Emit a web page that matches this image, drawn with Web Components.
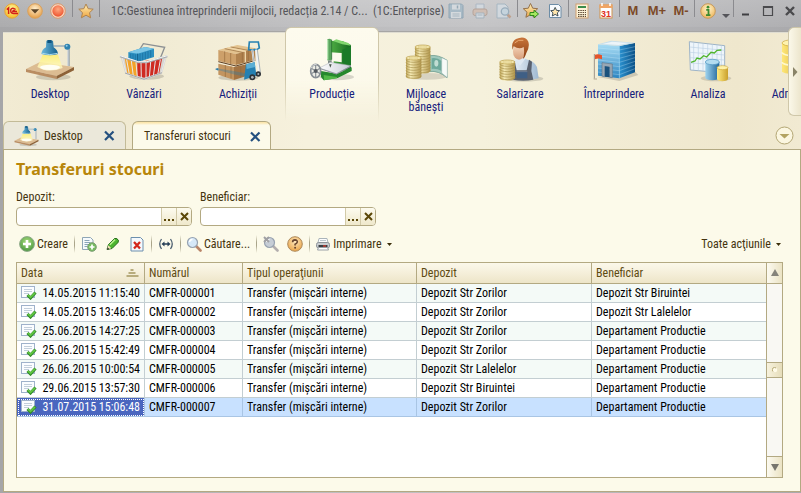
<!DOCTYPE html>
<html lang="ro">
<head>
<meta charset="utf-8">
<title>Transferuri stocuri</title>
<style>
html,body{margin:0;height:100%}
body{font:12px/16px "Roboto Condensed","Liberation Sans",sans-serif;--line:#b3a982;--ink:#44340f;--nav:#15207c;background:#a8a8ab;overflow:hidden}
</style>
</head>
<body>
<erp-window></erp-window>

<template id="t-window">
<style>
:host{display:flex;flex-direction:column;min-height:100vh;background:linear-gradient(90deg,#a6a6a8,#bcbcbe 40%,#c0c0c2 60%,#a9a9ac)}
.shell{flex:1;display:flex;flex-direction:column;margin:0 0 1px 3px}
</style>
<erp-titlebar></erp-titlebar>
<div class="shell">
<erp-head></erp-head>
<erp-page></erp-page>
</div>
</template>

<template id="t-titlebar">
<style>
:host{display:flex;align-items:center;height:27px;color:#555559;background:linear-gradient(#fff3,#fff1);box-sizing:border-box;padding-bottom:6px}
button{all:unset;width:24px;height:20px;display:flex;align-items:center;justify-content:center;flex:none}
.s button{width:23px}
.w button{width:22px}
.c{width:12px}
div{display:flex}
i{width:1px;height:17px;margin:0 1px;background:#8b8b8f;flex:none;align-self:flex-start}
h1{flex:1;min-width:0;margin:0;font-size:12px;font-weight:normal;line-height:20px;padding-left:10px;white-space:nowrap;overflow:hidden}
b{font:bold 13px/20px "Liberation Sans",sans-serif;color:#7c4a28}
.s{padding-right:2px}
</style>
<div class="s"><button aria-label="Meniu"><erp-icon name="logo"></erp-icon></button><button aria-label="Opțiuni"><erp-icon name="round-down"></erp-icon></button><button aria-label="Oprire"><erp-icon name="round-red"></erp-icon></button></div>
<i></i><button aria-label="Favorite"><erp-icon name="star"></erp-icon></button><i></i>
<h1>1C:Gestiunea întreprinderii mijlocii, redacția 2.14 / C...&nbsp; (1C:Enterprise)</h1>
<button aria-label="Salvare" disabled><erp-icon name="save"></erp-icon></button><button aria-label="Imprimare" disabled><erp-icon name="print-off"></erp-icon></button><button aria-label="Previzualizare" disabled><erp-icon name="preview"></erp-icon></button>
<i></i><button aria-label="Adaugă la favorite"><erp-icon name="star-go"></erp-icon></button><button aria-label="Link"><erp-icon name="star-doc"></erp-icon></button>
<i></i><button aria-label="Calculator"><erp-icon name="calc"></erp-icon></button><button aria-label="Calendar"><erp-icon name="calendar"></erp-icon></button>
<i></i><button><b>M</b></button><button><b>M+</b></button><button><b>M-</b></button>
<i></i><button aria-label="Informații"><erp-icon name="info"></erp-icon></button><button class="c" aria-label="Mai mult"><erp-icon name="caret-grey"></erp-icon></button>
<i></i><div class="w"><button aria-label="Minimizare"><erp-icon name="min"></erp-icon></button><button aria-label="Maximizare"><erp-icon name="max"></erp-icon></button><button aria-label="Închidere"><erp-icon name="close-win"></erp-icon></button></div>
</template>

<template id="t-head">
<style>
:host{display:block;position:relative;overflow:hidden;background:linear-gradient(#8b8b8e,#fbf8e8) 0 4px/100% 2px no-repeat,linear-gradient(90deg,#f2ebd3,#efe8cf 10%,#f6f1dd 38%,#f5f1dc 60%,#efe7cd 92%,#f1ead2) 0 5px no-repeat}
nav{display:flex;height:94px}
.more{all:unset;position:absolute;right:0;top:0;width:12px;height:87px;border:1px solid #cfc7a9;border-right:0;border-radius:6px 0 0 6px;background:linear-gradient(90deg,#fbf8e9,#ece5cc);display:flex;align-items:center;justify-content:center}
.bar{display:flex;align-items:flex-end;height:28px;gap:6px}
.list{all:unset;margin-left:auto;padding:0 7px 4px 0;line-height:0}
</style>
<nav>
<erp-section icon="desktop">Desktop</erp-section>
<erp-section icon="sales">Vânzări</erp-section>
<erp-section icon="purchase">Achiziții</erp-section>
<erp-section icon="production" active>Producție</erp-section>
<erp-section icon="money">Mijloace bănești</erp-section>
<erp-section icon="salary">Salarizare</erp-section>
<erp-section icon="company">Întreprindere</erp-section>
<erp-section icon="analysis">Analiza</erp-section>
<erp-section icon="admin">Administrare</erp-section>
</nav>
<button class="more" aria-label="Secțiunile următoare"><erp-icon name="right"></erp-icon></button>
<div class="bar">
<erp-tab icon="desktop-small">Desktop</erp-tab>
<erp-tab active>Transferuri stocuri</erp-tab>
<button class="list" aria-label="Lista ferestrelor"><erp-icon name="circle-down"></erp-icon></button>
</div>
</template>

<template id="t-section">
<style>
:host{display:block;flex:none;width:94px}
button{all:unset;box-sizing:border-box;position:relative;width:100%;height:100%;display:flex;flex-direction:column;align-items:center;padding:10px 8px 0;color:var(--nav);text-align:center;line-height:13px}
:host([active]) button::before{content:"";position:absolute;inset:0;border-radius:6px 6px 0 0;border:1px solid #cfc7a9;border-bottom:0;background:linear-gradient(#fdfbee,#fbf8e8);mask-image:linear-gradient(#000 55%,transparent)}
erp-icon,span{position:relative}
span{margin-top:6px;font-size:12px;max-width:66px}
</style>
<button><erp-icon></erp-icon><span><slot></slot></span></button>
</template>

<template id="t-tab">
<style>
:host{display:flex;align-items:center;box-sizing:border-box;height:28px;width:123px;padding:0 10px;border:1px solid #c3bb98;border-bottom:0;border-radius:6px 6px 0 0;background:#ebe8da;color:var(--ink)}
:host([active]){width:139px;height:29px;margin-bottom:-1px;padding:0 9px 0 11px;background:linear-gradient(#fbe3a4,#fcf0cb 2px,#fcfaea 3px);border-color:var(--line);position:relative;z-index:1}
button{all:unset;line-height:0}
.t{flex:1;line-height:26px}
erp-icon:not([name]){display:none}
erp-icon[name=desktop-small]{margin-right:5px}
</style>
<erp-icon></erp-icon><button class="t"><slot></slot></button><button aria-label="Închide fila"><erp-icon name="x-blue"></erp-icon></button>
</template>

<template id="t-page">
<style>
:host{flex:1;display:flex;flex-direction:column;border:1px solid var(--line);background:#fcfaea;padding:7px 17px 13px 12px;color:var(--ink)}
h2{margin:0 0 8px;font:bold 16px/24px "Noto Sans","DejaVu Sans",sans-serif;color:#b8860b}
.f{display:flex;gap:8px;margin-bottom:6px}
</style>
<h2>Transferuri stocuri</h2>
<div class="f"><erp-field label="Depozit:"></erp-field><erp-field label="Beneficiar:"></erp-field></div>
<erp-toolbar></erp-toolbar>
<erp-list></erp-list>
</template>

<template id="t-field">
<style>
:host{display:block;width:176px}
label{display:block;line-height:16px;margin-bottom:2px}
.b{display:flex;height:17px;border:1px solid var(--line);border-radius:4px;background:#fff;overflow:hidden}
input{all:unset;flex:1;min-width:0;padding:0 4px;color:#000}
button{all:unset;width:14px;border-left:1px solid #d2caa8;background:linear-gradient(#fdfbef,#efe8cb);display:flex;align-items:center;justify-content:center}
</style>
<label for="v"></label>
<div class="b"><input id="v"><button aria-label="Alege"><erp-icon name="dots"></erp-icon></button><button aria-label="Golește"><erp-icon name="x-brown"></erp-icon></button></div>
</template>

<template id="t-toolbar">
<style>
:host{display:flex;align-items:center;height:24px;margin-bottom:6px;white-space:nowrap}
button{all:unset;width:24px;height:24px;display:flex;align-items:center;justify-content:center;flex:none}
.t{width:auto;padding:0 4px 0 3px;gap:2px}
.t erp-icon+span+erp-icon,.r erp-icon{margin-left:3px}
i{width:1px;height:18px;margin:0 2px;background:linear-gradient(#fcfaea,#aaa58a 40%,#aaa58a 60%,#fcfaea);flex:none}
.r{margin-left:auto;padding-right:2px}
</style>
<button class="t"><erp-icon name="add"></erp-icon><span>Creare</span></button><i></i>
<button aria-label="Copiere"><erp-icon name="doc-add"></erp-icon></button><button aria-label="Modificare"><erp-icon name="pencil"></erp-icon></button><button aria-label="Ștergere"><erp-icon name="doc-del"></erp-icon></button><i></i>
<button aria-label="Interval"><erp-icon name="range"></erp-icon></button><i></i>
<button class="t"><erp-icon name="search"></erp-icon><span>Căutare...</span></button><i></i>
<button aria-label="Anulare căutare" disabled><erp-icon name="search-off"></erp-icon></button><button aria-label="Ajutor"><erp-icon name="help"></erp-icon></button><i></i>
<button class="t"><erp-icon name="print"></erp-icon><span>Imprimare</span><erp-icon name="caret"></erp-icon></button>
<button class="t r"><span>Toate acţiunile</span><erp-icon name="caret"></erp-icon></button>
</template>

<template id="t-list">
<style>
:host{flex:1;display:flex;border:1px solid var(--line);background:#fff;color:#000}
.g{flex:1;min-width:0}
table{width:100%;table-layout:fixed;border-collapse:separate;border-spacing:0}
th,td{box-sizing:border-box;height:19px;padding:0 4px;border:0 solid #c3ced2;border-width:0 1px 1px 0;text-align:left;font-weight:normal;white-space:nowrap;overflow:hidden;line-height:18px}
th{height:21px;color:#5e4b12;border-color:var(--line);background:linear-gradient(#fbf8ea,#f5efda 50%,#ede5c8);line-height:20px}
th:last-child,td:last-child{border-right:0}
tr:nth-child(odd) td{background:#f4faf7}
tr.on td{background:#c8e1ff;border-color:#a9c5e4}
tr.on td:first-child{background:#4a66bf;color:#fff;outline:1px dotted #fff;outline-offset:-2px}
div.d,th div{display:flex;align-items:center;justify-content:space-between}
th erp-icon{margin-right:1px}
.bar{width:15px;border-left:1px solid var(--line);background:#f9f8f3;display:flex;flex-direction:column}
.bar button{all:unset;height:20px;display:flex;align-items:center;justify-content:center;background:linear-gradient(90deg,#fcfaf0,#ebe3c4)}
.bar button:first-child{border-bottom:1px solid var(--line)}
.bar button:last-child{border-top:1px solid var(--line)}
.track{flex:1;display:flex;flex-direction:column}
.track::before{content:"";flex:1}
.track::after{content:"";flex:1}
.thumb{height:14px;border:solid var(--line);border-width:1px 0;background:linear-gradient(90deg,#f7f2dd,#e6ddba);display:flex;align-items:center;justify-content:center}
</style>
<div class="g"><table><colgroup><col style="width:128px"><col style="width:98px"><col style="width:174px"><col style="width:175px"><col></colgroup>
<thead><tr><th><div>Data<erp-icon name="sort"></erp-icon></div></th><th>Numărul</th><th>Tipul operaţiunii</th><th>Depozit</th><th>Beneficiar</th></tr></thead><tbody></tbody></table></div>
<div class="bar"><button aria-label="Sus"><erp-icon name="up"></erp-icon></button><div class="track"><div class="thumb"><erp-icon name="grip"></erp-icon></div></div><button aria-label="Jos"><erp-icon name="down"></erp-icon></button></div>
</template>

<script>
const svg=(w,h,vb,body)=>`<svg width="${w}" height="${h}" viewBox="${vb}" aria-hidden="true">${body}</svg>`;
const lg=(id,a,b,dir='v')=>`<linearGradient id="${id}" x1="0" y1="0" x2="${dir=='v'?0:1}" y2="${dir=='v'?1:0}"><stop offset="0" stop-color="${a}"/><stop offset="1" stop-color="${b}"/></linearGradient>`;
const rg=(id,a,b)=>`<radialGradient id="${id}" cx=".5" cy=".35" r=".6"><stop offset="0" stop-color="${a}"/><stop offset="1" stop-color="${b}"/></radialGradient>`;
/* stack of n coins: centre x, top y, half width */
const coins=(cx,y,r,n,step,c1='#f3e7ae',c2='#b79a45')=>{
 const h=n*step;let s=`<path d="M${cx-r} ${y}v${h}a${r} 8 0 0 0 ${2*r} 0v${-h}z" fill="url(#coin)"/>`;
 for(let i=1;i<=n;i++)s+=`<path d="M${cx-r} ${y+i*step-3}a${r} 8 0 0 0 ${2*r} 0" fill="none" stroke="#a8914c" stroke-width="2"/>`;
 return s+`<ellipse cx="${cx}" cy="${y}" rx="${r}" ry="6" fill="${c1}" stroke="${c2}" stroke-width="2"/><ellipse cx="${cx}" cy="${y}" rx="${r-9}" ry="3" fill="none" stroke="#d6c27c" stroke-width="1.5"/>`};
const coinDef=`<defs><linearGradient id="coin"><stop offset="0" stop-color="#bda356"/><stop offset=".3" stop-color="#f6ebb5"/><stop offset="1" stop-color="#b0944a"/></linearGradient></defs>`;
const cyl=(x,y,w,h,id)=>`<path d="M${x} ${y}v${h}a${w/2} 8 0 0 0 ${w} 0v${-h}z" fill="url(#${id})"/>`;
const desk=`<defs>${lg('db','#6db9dd','#145f8c','h')}${lg('dy','#fff06a','#fffbd8')}</defs>
<ellipse cx="160" cy="232" rx="52" ry="10" fill="#000" opacity=".14"/>
<path d="M206 147V200" stroke="#8b99a4" stroke-width="6"/><path d="M204 147V200" stroke="#dfe6ea" stroke-width="3"/>
<path d="M160 139H200" stroke="#9fb2bd" stroke-width="5"/>
<path d="M78 208L120 187L222 202L170 229Z" fill="#dcbc92"/><path d="M78 208L170 229V238L78 217Z" fill="#b98d62"/><path d="M170 229L222 202V212L170 238Z" fill="#8d6238"/>
<path d="M128 165L112 202Q145 222 188 205L174 165Z" fill="url(#dy)" opacity=".82"/><ellipse cx="150" cy="203" rx="30" ry="8" fill="#fffef2"/>
<path d="M139 123h20l2 20q12 8 13 20q-25 8-50 0q1-13 14-20z" fill="url(#db)"/><rect x="142" y="121" width="13" height="9" fill="#0f557f"/><path d="M127 161q22 8 46 0" stroke="#a8d9ee" stroke-width="3" fill="none"/>
<circle cx="202" cy="141" r="9" fill="#2d82b0"/><circle cx="200" cy="138" r="3" fill="#9ad0e8"/>`;
const mag=(g,h,d='')=>svg(16,16,'0 0 16 16',`<path d="M10 10L14.500 14.500" stroke="${h}" stroke-width="2.600" stroke-linecap="round"/><circle cx="6.500" cy="6.500" r="5" fill="${g}" stroke="#97a2b0" stroke-width="1.200"/><path d="M3.500 6a3 3 0 0 1 3-2.600" stroke="#fff" fill="none" stroke-width="1.500"/>${d}`);
const printer=svg(16,16,'0 0 16 16',`<path d="M4 2.500h8l1 4H3z" fill="#fdfdfd" stroke="#aab4ba"/><path d="M5 4.500h6" stroke="#bcc6cc"/><rect x="1.500" y="6.500" width="13" height="5.500" rx="2" fill="#c9cdd0" stroke="#8f959a"/><path d="M3.500 9h9v2h-9z" fill="#3a3e42"/><path d="M3.500 11.500h9l1 2.500h-11z" fill="#fff" stroke="#9aa0a5"/><path d="M8 10h3" stroke="#e5402f" stroke-width="1.200"/>`);
const starP='M8 1L10.2 5.7L15.2 6.2L11.5 9.7L12.6 14.8L8 12.2L3.4 14.8L4.5 9.7L.8 6.2L5.8 5.7Z';
const ICONS={
logo:svg(16,16,'0 0 16 16',`<defs>${rg('a','#fff9a0','#f5bf2c')}</defs><circle cx="8" cy="8" r="7.200" fill="url(#a)" stroke="#e7a43a"/><path d="M2.800 6.600L4.600 5V11M11.600 6.500Q8.400 3.900 6.900 6.400Q6 10.300 9.400 10.400H14M11 8.200Q9.200 6.700 8.800 8.600H13" fill="none" stroke="#d3201a" stroke-width="1.500"/>`),
'round-down':svg(16,16,'0 0 16 16',`<defs>${rg('a','#fff0d0','#e6a24e')}</defs><circle cx="8" cy="8" r="7.300" fill="url(#a)" stroke="#d9a05c"/><path d="M3.800 6.300h8.400L8 10.600z" fill="#5d4527"/>`),
'round-red':svg(16,16,'0 0 16 16',`<defs>${rg('a','#ffa880','#ee5a35')}</defs><circle cx="8" cy="8" r="7.300" fill="#f8d9c2" stroke="#d9986c"/><circle cx="8" cy="8" r="5.700" fill="url(#a)"/>`),
star:svg(16,16,'0 0 16 16',`<defs>${lg('a','#fff0b8','#efa53e')}</defs><path d="${starP}" fill="url(#a)" stroke="#b08450"/>`),
save:svg(16,16,'0 0 16 16',`<g opacity=".55"><path d="M1 1h12.500L15 2.500V15H1z" fill="#8fb0c4" stroke="#648aa3"/><rect x="4" y="1.500" width="8" height="5" fill="#dde6ec"/><path d="M9.500 2.500v3" stroke="#6c8ea4" stroke-width="1.500"/><rect x="3" y="9" width="10" height="6" fill="#dfe8ee"/><path d="M4.500 11h7M4.500 13h7" stroke="#8fa9b9"/></g>`),
'print-off':svg(16,16,'0 0 16 16',`<g opacity=".6"><path d="M4 1h8v6H4z" fill="#d7e2ea" stroke="#9ab"/><rect x="1" y="6" width="14" height="6.500" rx="2" fill="#d4b7a5" stroke="#a78a78"/><path d="M4 10h8v5H4z" fill="#dbe6ee" stroke="#8fa5b5"/><path d="M5.500 12h5" stroke="#8fa5b5"/></g>`),
preview:svg(16,16,'0 0 16 16',`<g opacity=".6"><path d="M1 1h8l3 3v11H1z" fill="#d9e4ec" stroke="#8fa9bb"/><path d="M11.500 11.500L14.500 14.500" stroke="#b98866" stroke-width="2.500"/><circle cx="9" cy="8.500" r="3.700" fill="#c4dceb" stroke="#7c9cb2" stroke-width="1.300"/></g>`),
'star-go':svg(16,16,'0 0 16 16',`<defs>${lg('a','#fff0b8','#e9a54c')}</defs><path d="${starP}" transform="translate(-.5 -.5)" fill="url(#a)" stroke="#94714b"/><path d="M7 9.500h4V7.200L15.500 11L11 14.800V12.500H7z" fill="#a4e860" stroke="#2e8b1c"/>`),
'star-doc':svg(16,16,'0 0 16 16',`<path d="M2.500 1.500h9l2.500 2.500v10.500h-11.500z" fill="#f7fafc" stroke="#6c8ca6"/><path d="${starP}" transform="translate(3.200 3.800) scale(.62)" fill="#ffe6ad" stroke="#33444f" stroke-width="1.500"/>`),
calc:svg(16,16,'0 0 16 16',`<rect x="2" y="1" width="12" height="14" fill="#fdf3d8" stroke="#d0a070"/><rect x="4" y="3" width="8" height="2" fill="#3c8c4c"/><path d="M4 7.500h8M4 9.500h8M4 11.500h8M4 13.300h8" stroke="#5f4a35" stroke-width="1.200" stroke-dasharray="1.500 .8"/>`),
calendar:svg(16,16,'0 0 16 16',`<rect x="2" y="2" width="12" height="13" fill="#fff" stroke="#d1934e"/><rect x="1.500" y="1.500" width="13" height="3.500" fill="#f0a565"/><path d="M4 0v3M12 0v3" stroke="#fff" stroke-width="1.500"/><text x="8" y="13.500" text-anchor="middle" font-family="Liberation Sans,sans-serif" font-size="9" font-weight="bold" fill="#e0301c">31</text>`),
info:svg(16,16,'0 0 16 16',`<defs>${rg('a','#fff3c8','#efbb66')}</defs><circle cx="8" cy="8" r="7.300" fill="url(#a)" stroke="#c69a5c"/><circle cx="8" cy="4.200" r="1.400" fill="#3c8b30"/><path d="M6.200 6.800h2.300v5.200M6 12.200h4.400" stroke="#3c8b30" stroke-width="1.800" fill="none"/>`),
'caret-grey':svg(8,16,'0 0 8 16','<path d="M0 11h8L4 15z" fill="#55555a"/>'),
min:svg(10,12,'0 0 10 12','<path d="M1 9.500h7" stroke="#3f3f42" stroke-width="2"/>'),
max:svg(12,12,'0 0 12 12','<path d="M1 1.500h10M1 10.500h10M1.500 1v10M10.500 1v10" stroke="#4a4a4d" stroke-width="1.200"/><path d="M1 2h10" stroke="#4a4a4d" stroke-width="2"/>'),
'close-win':svg(12,12,'0 0 12 12','<path d="M2 2L10 10M10 2L2 10" stroke="#4a4a4d" stroke-width="2.400"/>'),
right:svg(6,10,'0 0 6 10','<path d="M1 0v10L5.500 5z" fill="#8a8468"/>'),
'circle-down':svg(19,19,'0 0 19 19','<circle cx="9.500" cy="9.500" r="8.500" fill="#fbf6e0" stroke="#b3a674"/><path d="M4.500 8h10L9.500 12.500z" fill="#b3a361"/>'),
'x-blue':svg(11,11,'0 0 11 11','<path d="M1 1.500L9.500 10M9.500 1.500L1 10" stroke="#24507f" stroke-width="2.200"/>'),
'x-brown':svg(9,9,'0 0 9 9','<path d="M1 1L8 8M8 1L1 8" stroke="#5b4708" stroke-width="2"/>'),
dots:svg(11,9,'0 0 11 9','<path d="M0 7h2v2H0zM4 7h2v2H4zM8 7h2v2H8z" fill="#5b4708"/>'),
caret:svg(5,3,'0 0 5 3','<path d="M0 0h5L2.500 3z" fill="#3b2d08"/>'),
sort:svg(13,8,'0 0 13 8','<path d="M4.500 0h3v2h-3zM2.500 3h7v2h-7zM.5 6h12v2H.5z" fill="#b8ac7d"/>'),
up:svg(8,8,'0 0 8 8','<path d="M4 0L8 7H0z" fill="#85837a"/>'),
down:svg(8,8,'0 0 8 8','<path d="M0 1h8L4 8z" fill="#77756d"/>'),
grip:svg(6,6,'0 0 6 6','<circle cx="3" cy="3" r="2.200" fill="#fffbe8"/><path d="M1 4.500A2.200 2.200 0 0 1 4 1" stroke="#b5a876" fill="none"/>'),
add:svg(16,16,'0 0 16 16',`<defs>${rg('a','#a9dd7d','#529d45')}</defs><circle cx="8" cy="8" r="7.400" fill="url(#a)" stroke="#8fa98a"/><path d="M8 4v8M4 8h8" stroke="#fff" stroke-width="2.600"/>`),
'doc-add':svg(16,16,'0 0 16 16',`<path d="M1.500 1.500h8l2.500 2.500v9.500H1.500z" fill="#f6fafc" stroke="#8fa6b6"/><path d="M3.500 4.500h5M3.500 6.500h6M3.500 8.500h5M3.500 10.500h3" stroke="#8aa5b8"/><circle cx="11" cy="11" r="4.300" fill="#74bb5e" stroke="#7c9c75"/><path d="M11 8.500v5M8.500 11h5" stroke="#fff" stroke-width="1.700"/>`),
pencil:svg(16,16,'0 0 16 16',`<path d="M2 13.500L3.500 8.500L9.500 2.500Q12 1.500 13.500 4.500L13 6.500L7 12.500z" fill="#4cb52e" stroke="#256b1b"/><path d="M4.800 8.700L10 3.600" stroke="#b8f08e" stroke-width="1.600"/><path d="M2 13.500L3.300 9.200L6.300 12.300z" fill="#f3e0b8"/><path d="M2 13.800L2.600 11.500L4.300 13z" fill="#222"/>`),
'doc-del':svg(16,16,'0 0 16 16',`<path d="M2 1.500h9.500l2.500 2.500v11H2z" fill="#f5f9fc" stroke="#6c8fae"/><path d="M5 6L11 12.500M11 6L5 12.500" stroke="#d3271c" stroke-width="2.300"/>`),
range:svg(16,16,'0 0 16 16','<path d="M3.500 3Q0 8 3.500 13M12.500 3Q16 8 12.500 13" fill="none" stroke="#4c5f70" stroke-width="1.300"/><path d="M5 8h6" stroke="#263e56" stroke-width="1.500"/><path d="M3.500 8L6.500 5.500v5zM12.500 8L9.500 5.500v5z" fill="#263e56"/>'),
search:mag('#d6e8f8','#b98468'),
'search-off':mag('#c6cdd6','#b3aeae','<path d="M1 1L6 6M6 1L1 6" stroke="#a0a0a4" stroke-width="2"/>'),
help:svg(16,16,'0 0 16 16',`<defs>${rg('a','#ffe9bd','#eba850')}</defs><circle cx="8" cy="8" r="7.300" fill="url(#a)" stroke="#ad8a5c"/><path d="M5.600 6.300Q5.600 3.900 8 3.900Q10.400 4 10.300 6Q10.200 7.200 8.100 8.200V9.600" stroke="#6a4630" stroke-width="1.600" fill="none"/><circle cx="8.100" cy="11.700" r="1" fill="#6a4630"/>`),
print:printer,
row:svg(16,14,'0 0 16 14',`<rect x=".5" y=".5" width="13" height="11" fill="#fbfdff" stroke="#9fb2cb"/><path d="M3 3.500h8M3 5.500h8M3 7.500h5" stroke="#c3cfdb"/><path d="M6.500 9L9.500 12L14.500 6.500" stroke="#2f8a26" stroke-width="3" fill="none"/><path d="M7 9L9.500 11.400L14 6.800" stroke="#62c843" stroke-width="1.700" fill="none"/>`),
'desktop-small':svg(25,22,'75 115 150 130',desk),
desktop:svg(50,45,'75 112 150 135',desk),
sales:svg(50,45,'357 112 150 135',`<ellipse cx="440" cy="230" rx="52" ry="10" fill="#000" opacity=".15"/>
<path d="M420 148L430 132L494 143L480 178" fill="none" stroke="#8c9093" stroke-width="4"/>
<path d="M362 172L438 193L500 172L486 222L432 240L376 222Z" fill="#d8d4cf"/>
<path d="M374 176L412 186V230L382 220Z" fill="#f3a227"/><path d="M412 186L486 178L478 220L432 234L412 228Z" fill="#cf2a21"/>
<path d="M385 158L435 142L462 147V172L413 187L385 180Z" fill="#2d8fc0"/><path d="M385 158L435 142L462 147L413 162Z" fill="#7cc6e6"/><path d="M413 162V187" stroke="#125d89" stroke-width="3"/><path d="M420 162v22M428 160v22M436 157v22M444 154v22M452 152v21M392 162v18M399 163v19M406 164v20" stroke="#17699a" stroke-width="2"/>
<path d="M360 170L415 188H440L502 170" fill="none" stroke="#a9adb0" stroke-width="6"/><path d="M360 168L415 186H440L502 168" fill="none" stroke="#f6f7f7" stroke-width="3"/>
<path d="M367 176L379 222L432 240L484 220L496 176M380 180L388 224M394 184L400 229M408 188L412 233M423 190L424 237M438 190V238M452 187L448 234M466 184L460 230M481 180L473 226" fill="none" stroke="#e6e8e9" stroke-width="3"/><path d="M375 220L432 239L486 219" fill="none" stroke="#a5a7a9" stroke-width="3"/>`),
purchase:svg(50,45,'639 112 150 135',`<ellipse cx="715" cy="234" rx="60" ry="9" fill="#000" opacity=".15"/>
<path d="M655 192L702 202V241L655 225Z" fill="#c39560"/><path d="M702 202L756 190V224L702 241Z" fill="#a27343"/>
<path d="M655 151L712 136L766 146L708 163Z" fill="#e3c28e"/><path d="M655 151L708 163V196L655 184Z" fill="#cda06a"/><path d="M708 163L766 146V180L708 196Z" fill="#b0824e"/>
<path d="M674 147L727 158V190M692 142L745 152V184M674 155V188M692 160V193M676 196V232M693 200V236M722 198V233M738 194V228" stroke="#966b3d" stroke-width="2" fill="none"/><path d="M682 144L736 155V187" stroke="#f0d7aa" stroke-width="4" fill="none"/><path d="M655 186L708 199L766 182" stroke="#5d3c1d" stroke-width="3" fill="none"/>
<path d="M646 209L700 224L742 232L744 222L700 214L650 206Z" fill="#2c7ca8" opacity=".35"/><path d="M645 208l10-3v8z" fill="#2c7ca8"/>
<path d="M748 127H775L778 145Q770 153 746 150Z" fill="none" stroke="#2681b2" stroke-width="5"/><path d="M757 150L766 222M768 150L778 217" stroke="#f0f3f5" stroke-width="6"/><path d="M757 150L766 222M772 150L781 217" stroke="#8997a2" stroke-width="2"/>
<path d="M738 194L764 188L769 228L732 240Z" fill="#2580b2"/><path d="M738 194L764 188L766 202L740 208Z" fill="#5baed5"/>
<circle cx="757" cy="233" r="9" fill="#2e3338"/><circle cx="757" cy="233" r="4" fill="#aeb6bc"/><circle cx="775" cy="223" r="8" fill="#2e3338"/><circle cx="775" cy="223" r="3" fill="#aeb6bc"/>`),
production:svg(50,45,'126 112 150 135',`<defs>${lg('g','#4fae44','#14691f','h')}${lg('p','#fefefe','#c8cbd6','h')}</defs><ellipse cx="215" cy="232" rx="52" ry="10" fill="#000" opacity=".14"/>
<path d="M196 124L232 124L258 136V208L226 216L206 200V185L230 188V160L196 158Z" fill="url(#g)"/><path d="M204 124L214 119L250 130L258 138L232 134Z" fill="#81d66e"/><path d="M232 150V190L258 196V140Z" fill="#1b7a28"/>
<path d="M186 120Q193 114 200 120V182H186Z" fill="#58a45c"/><path d="M188 120V180" stroke="#b6e5b2" stroke-width="4"/><path d="M200 120V180" stroke="#1b6224" stroke-width="2"/><rect x="189" y="182" width="11" height="12" fill="#7c8a84"/>
<path d="M168 214L216 222L260 203V214L218 235L176 242L168 232Z" fill="#26882d"/><path d="M176 226L216 232V236L177 242Z" fill="#52b847"/>
<path d="M163 205L196 188L258 198L214 222Z" fill="url(#p)" stroke="#a7acb7" stroke-width="1.500"/><path d="M163 206L214 223L258 200" stroke="#8f949f" stroke-width="3" fill="none"/>
<path d="M192 194l4 10 4-10" fill="#465548"/><ellipse cx="152" cy="214" rx="15" ry="20" fill="#d7dbdf" fill-opacity=".4" stroke="#878e94" stroke-width="5"/><path d="M152 196V232M139 206L165 222M139 222L165 206" stroke="#888f95" stroke-width="3.500"/><circle cx="152" cy="214" r="6" fill="#54595e"/><path d="M138 206Q143 193 155 194" stroke="#fff" stroke-width="2" fill="none"/>`),
money:svg(50,45,'408 112 150 135',coinDef+`<ellipse cx="485" cy="230" rx="64" ry="10" fill="#000" opacity=".12"/><path d="M494 168Q520 164 546 182V234Q520 212 494 216Z" fill="#9fc8bc" stroke="#5d8f83" stroke-width="2"/><path d="M500 176Q516 173 530 184V214Q515 206 500 208Z" fill="#6ea99b"/><path d="M530 174L547 182V234L530 220Z" fill="#f7faf8" stroke="#8fb0a8" stroke-width="1.500"/><ellipse cx="514" cy="191" rx="6" ry="10" fill="#c1ddd3"/>`+coins(473,142,23,9,8)+coins(446,175,23,7,8)),
salary:svg(50,45,'255 112 150 135',coinDef+`<defs>${lg('hr','#c9753a','#8a3e15')}${lg('sk','#f8dcc2','#d79d79')}${lg('sh','#f3f8fc','#9fb9d1','h')}</defs><ellipse cx="340" cy="237" rx="60" ry="9" fill="#000" opacity=".14"/>
<path d="M298 238V195Q304 184 322 180L345 177Q374 184 381 202L386 236Q342 246 298 238Z" fill="url(#sh)"/><path d="M316 175L330 198L348 175Z" fill="#dfe9f2"/>
<path d="M314 184L320 212H350L357 180L366 186L364 214L370 240Q340 246 308 240L310 212L306 188Z" fill="#59616e"/><path d="M320 216H352V236H320Z" fill="#3f5f85"/><path d="M320 216h32" stroke="#7c8ba0" stroke-width="2"/>
<ellipse cx="327" cy="156" rx="18" ry="24" fill="url(#sk)"/><path d="M308 150Q302 128 318 118Q345 106 355 126Q360 142 349 160Q344 176 338 178Q345 162 341 142Q328 150 311 140Z" fill="url(#hr)"/><path d="M314 130Q325 118 340 122" stroke="#e9a972" stroke-width="3" fill="none"/>`+coins(292,187,23,6,8)),
company:svg(50,45,'174 112 150 135',`<defs>${lg('f','#a7dcf4','#2b84c0')}${lg('e','#2b92d0','#0b5187','h')}</defs><path d="M200 232L265 244L322 226L312 216Z" fill="#000" opacity=".15"/>
<path d="M201 134L265 139V236L201 228Z" fill="url(#f)"/><path d="M265 139L312 130V218L265 236Z" fill="url(#e)"/><path d="M201 134L240 123L312 129L265 139Z" fill="#c7dfeb"/><path d="M214 133L243 126L296 130L263 136Z" fill="#edf4f8"/>
<path d="M201 145L265 151L312 141M201 157L265 163L312 152M201 169L265 176L312 163M201 181L265 188L312 174M201 193L265 201L312 185M201 205L265 213L312 196M201 217L265 225L312 207" stroke="#d8f2ff" stroke-width="2" fill="none" opacity=".45"/><path d="M265 139V236" stroke="#a6dcf7" stroke-width="1.500"/>
<path d="M213 189L244 193V234L236 233V202L221 200V231L213 229Z" fill="#99a8b4" stroke="#68798a" stroke-width="2"/><path d="M222 200L235 202V233L222 231Z" fill="#1b527c"/>
<path d="M190 163V237" stroke="#9e9589" stroke-width="3"/><path d="M192 165Q201 161 213 167V179Q202 174 192 179Z" fill="#e5542a"/><path d="M188 238h10" stroke="#b3a894" stroke-width="3"/>`),
analysis:svg(50,45,'456 112 150 135',`<defs>${lg('b','#9fd3ee','#20669a','h')}${lg('y','#ffeb83','#caa02c','h')}</defs><ellipse cx="555" cy="236" rx="46" ry="9" fill="#000" opacity=".13"/><path d="M475 126L581 138V220L478 211Z" fill="#eef5fb" stroke="#9eb4c7" stroke-width="3"/>
<path d="M476 142L581 152M477 158L581 166M477 174L581 181M478 190L581 196M488 128V211M502 130V213M516 131V214M530 133V216M544 134V217M558 136V218M571 137V219" stroke="#b9cfe2" stroke-width="1.800"/><path d="M480 188L492 184L498 175L507 178L518 168L527 172L540 158L550 160L558 152L571 151" fill="none" stroke="#4fb52c" stroke-width="4"/>`+cyl(523,187,42,47,'b')+`<ellipse cx="544" cy="187" rx="21" ry="8" fill="#b3dcf0" stroke="#4b92bf" stroke-width="2"/>`+cyl(558,204,33,33,'y')+`<ellipse cx="574.500" cy="204" rx="16.500" ry="6" fill="#fff2a8" stroke="#cda63b" stroke-width="2"/>`),
admin:svg(50,45,'738 112 150 135',`<defs>${lg('y','#ffe879','#c79b26','h')}</defs>`+cyl(753,130,70,85,'y')+`<ellipse cx="788" cy="130" rx="35" ry="10" fill="#fff3ae" stroke="#caa53a" stroke-width="2"/><path d="M753 158a35 10 0 0 0 70 0M753 187a35 10 0 0 0 70 0" fill="none" stroke="#fff8cc" stroke-width="5"/>`)
};
const define=(tag,setup)=>customElements.define(tag,class extends HTMLElement{
 connectedCallback(){
  if(this.shadowRoot)return;
  const root=this.attachShadow({mode:'open'});
  root.append(document.getElementById('t-'+tag.slice(4)).content.cloneNode(true));
  if(setup)setup(root,this);
 }
});
customElements.define('erp-icon',class extends HTMLElement{
 static observedAttributes=['name'];
 constructor(){super();this.attachShadow({mode:'open'})}
 attributeChangedCallback(){this.shadowRoot.innerHTML='<style>:host{display:inline-block;line-height:0;flex:none}svg{display:block}</style>'+(ICONS[this.getAttribute('name')]||'')}
});
const ROWS=[
['14.05.2015 11:15:40','Depozit Str Zorilor','Depozit Str Biruintei'],
['14.05.2015 13:46:05','Depozit Str Zorilor','Depozit Str Lalelelor'],
['25.06.2015 14:27:25','Depozit Str Zorilor','Departament Productie'],
['25.06.2015 15:42:49','Depozit Str Zorilor','Departament Productie'],
['26.06.2015 10:00:54','Depozit Str Lalelelor','Departament Productie'],
['29.06.2015 13:57:30','Depozit Str Biruintei','Departament Productie'],
['31.07.2015 15:06:48','Depozit Str Zorilor','Departament Productie']];
define('erp-section',(r,el)=>r.querySelector('erp-icon').setAttribute('name',el.getAttribute('icon')));
define('erp-tab',(r,el)=>{if(el.hasAttribute('icon'))r.querySelector('erp-icon').setAttribute('name',el.getAttribute('icon'))});
define('erp-field',(r,el)=>{r.querySelector('label').textContent=el.getAttribute('label')});
define('erp-toolbar');
define('erp-list',r=>{r.querySelector('tbody').innerHTML=ROWS.map(([d,a,b],i)=>`<tr${i==6?' class="on"':''}><td><div class="d"><erp-icon name="row"></erp-icon><span>${d}</span></div></td><td>CMFR-00000${i+1}</td><td>Transfer (mișcări interne)</td><td>${a}</td><td>${b}</td></tr>`).join('')});
define('erp-titlebar');
define('erp-head');
define('erp-page');
define('erp-window');
</script>
</body>
</html>
